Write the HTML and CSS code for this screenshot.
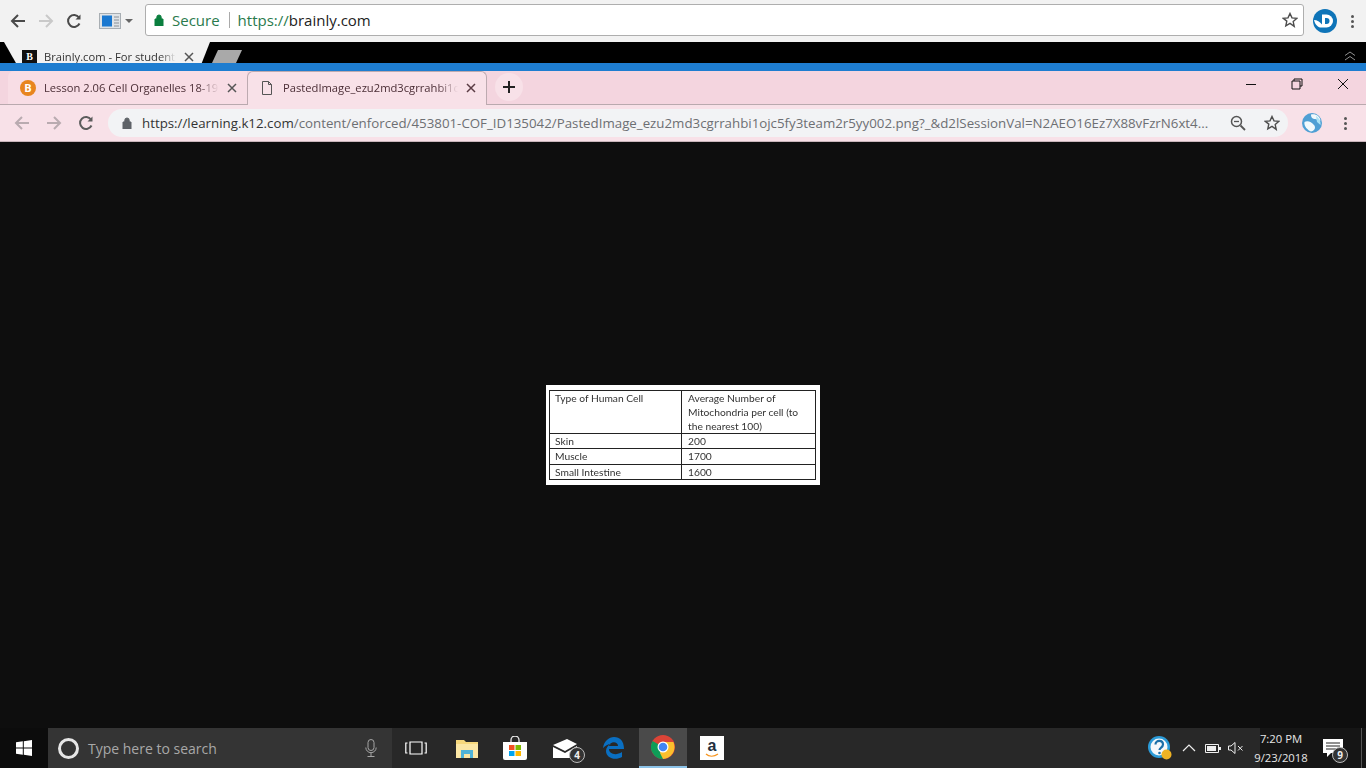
FILE: index.html
```html
<!DOCTYPE html>
<html lang="en">
<head>
<meta charset="utf-8">
<title>PastedImage</title>
<link rel="stylesheet" href="styles.css">
</head>
<body>
<div class="outer-toolbar">
  <svg class="nav-icon" viewBox="0 0 16 16"><path d="M15 8H2M8 2 2 8l6 6" class="st-dark"/></svg>
  <svg class="nav-icon" viewBox="0 0 16 16"><path d="M1 8h13M8 2l6 6-6 6" class="st-faint"/></svg>
  <svg class="nav-icon" viewBox="0 0 16 16"><path d="M13.500 10.500A6 6 0 1 1 13 4.500" class="st-dark"/><path d="M14.500 1.500v5h-5z" class="fill-dark"/></svg>
  <div class="ext-btn">
    <svg class="ext-icon" viewBox="0 0 22 16"><rect x=".5" y=".5" width="21" height="15" fill="#dfe3e6" stroke="#a8aeb3"/><rect x="3" y="2.500" width="10" height="11" fill="#1a78d0"/><path d="M15 4h5M15 7h5M15 10h5M15 13h5" stroke="#8a9097" fill="none"/></svg>
    <span class="caret"></span>
  </div>
  <div class="omnibox">
    <svg class="lock" viewBox="0 0 10 12"><path d="M1 5h8v7H1zM2.800 5V3.200a2.200 2.200 0 0 1 4.400 0V5" fill="#0b7f3f" stroke="#0b7f3f"/></svg>
    <span class="secure">Secure</span>
    <span class="divider"></span>
    <span class="url-green">https://</span><span class="url-dark">brainly.com</span>
    <svg class="star star-top" viewBox="0 0 16 16"><path d="m8 1.500 2 4.400 4.700.5-3.500 3.200 1 4.700L8 11.400 3.800 13.800l1-4.700L1.300 6.400 6 5.900z" class="st-star"/></svg>
  </div>
  <div class="profile-d">
    <svg viewBox="0 0 24 24" class="profile-svg"><circle cx="12" cy="12" r="12" fill="#0e74b8"/><path d="M9 5.500h4.500a6.500 6.500 0 0 1 0 13H9z" fill="#fff"/><path d="M12 9h1.500a3 3 0 0 1 0 6H12z" fill="#0e74b8"/><path d="M1 11c3 0 6 2 8 4.500v3c-4 .5-7-3-8-7.500z" fill="#fff"/></svg>
  </div>
  <div class="dots dots-top"><i></i><i></i><i></i></div>
</div>

<div class="black-strip">
  <div class="old-tab">
    <span class="b-fav">B</span>
    <span class="old-title">Brainly.com - For students</span>
    <svg class="x-icon x-old" viewBox="0 0 10 10"><path d="m1 1 8 8M9 1 1 9" class="st-x"/></svg>
  </div>
  <div class="old-new"></div>
  <svg class="chev" viewBox="0 0 12 10"><path d="m1 4.500 5-3.500 5 3.500M1 9l5-3.500L11 9" fill="none" stroke="#8f8f8f"/></svg>
</div>
<div class="blue-strip"></div>

<div class="tabstrip">
  <div class="tab tab-idle">
    <span class="o-fav">B</span>
    <span class="tab-title">Lesson 2.06 Cell Organelles 18-19</span>
    <svg class="x-icon" viewBox="0 0 10 10"><path d="m1 1 8 8M9 1 1 9" class="st-x"/></svg>
  </div>
  <div class="tab tab-active">
    <svg class="doc" viewBox="0 0 12 14"><path d="M1.500.5h6l3 3v10h-9zM7.500.5v3h3" fill="none" stroke="#555"/></svg>
    <span class="tab-title">PastedImage_ezu2md3cgrrahbi1ojc5fy3team2r5yy002.png</span>
    <svg class="x-icon" viewBox="0 0 10 10"><path d="m1 1 8 8M9 1 1 9" class="st-x2"/></svg>
  </div>
  <div class="newtab"><svg viewBox="0 0 12 12" class="plus"><path d="M6 0v12M0 6h12" stroke="#222" stroke-width="2"/></svg></div>
  <div class="win-controls">
    <svg class="win-ico" viewBox="0 0 12 12"><path d="M1 6.500h10" stroke="#111" fill="none"/></svg>
    <svg class="win-ico" viewBox="0 0 12 12"><path d="M3 3V1h8v7H9M1 3h8v8H1z" stroke="#111" fill="none"/></svg>
    <svg class="win-ico" viewBox="0 0 12 12"><path d="m1 1 10 10M11 1 1 11" stroke="#111" fill="none"/></svg>
  </div>
</div>

<div class="inner-toolbar">
  <svg class="nav-icon nav-a" viewBox="0 0 16 16"><path d="M15 8H2M8 2 2 8l6 6" class="st-faint2"/></svg>
  <svg class="nav-icon nav-b" viewBox="0 0 16 16"><path d="M1 8h13M8 2l6 6-6 6" class="st-faint2"/></svg>
  <svg class="nav-icon nav-c" viewBox="0 0 16 16"><path d="M13.500 10.500A6 6 0 1 1 13 4.500" class="st-mid"/><path d="M14.500 1.500v5h-5z" class="fill-mid"/></svg>
  <div class="inner-omni">
    <svg class="lock2" viewBox="0 0 10 12"><path d="M1 5h8v7H1zM2.800 5V3.200a2.200 2.200 0 0 1 4.400 0V5" fill="#5f6368" stroke="#5f6368"/></svg>
    <span class="inner-url"><span class="inner-host">https://learning.k12.com</span>/content/enforced/453801-COF_ID135042/PastedImage_ezu2md3cgrrahbi1ojc5fy3team2r5yy002.png?_&amp;d2lSessionVal=N2AEO16Ez7X88vFzrN6xt4...</span>
    <svg class="zoom-ico" viewBox="0 0 16 16"><circle cx="6.500" cy="6.500" r="5" fill="none" stroke="#555" stroke-width="1.500"/><path d="M4 6.500h5" stroke="#555" stroke-width="1.300"/><path d="m10.500 10.500 4.500 4.500" stroke="#555" stroke-width="1.800"/></svg>
    <svg class="star star-in" viewBox="0 0 16 16"><path d="m8 1.500 2 4.400 4.700.5-3.500 3.200 1 4.700L8 11.400 3.800 13.800l1-4.700L1.300 6.400 6 5.900z" class="st-star"/></svg>
  </div>
  <svg class="globe" viewBox="0 0 20 20"><circle cx="10" cy="10" r="10" fill="#4f9fd4"/><path d="M9 1.500c5-1 9 2 9.500 6-2 1-3.500-1.500-5.500-1.500S9 5 9 1.500zM2.500 9c3-2 7 0 9.500 3s0 6-3 6.500c-3-1-7.500-5.500-6.500-9.500z" fill="#f1f9fc"/><path d="M14 3c3 2 5 5 4.500 9L15 9z" fill="#a9e2f5"/></svg>
  <div class="dots dots-in"><i></i><i></i><i></i></div>
</div>

<main class="page">
  <div class="pasted">
    <table class="cells">
      <tr class="row-head"><td class="col-a">Type of Human Cell</td><td class="col-b">Average Number of Mitochondria per cell (to the nearest 100)</td></tr>
      <tr class="row-s"><td>Skin</td><td class="col-b">200</td></tr>
      <tr class="row-m"><td>Muscle</td><td class="col-b">1700</td></tr>
      <tr class="row-s"><td>Small Intestine</td><td class="col-b">1600</td></tr>
    </table>
  </div>
</main>

<footer class="taskbar">
  <div class="start"><svg class="win-logo" viewBox="0 0 16 16"><path d="M0 2.300 6.800 1.300v6.300H0zM7.800 1.200 16 0v7.600H7.800zM0 8.500h6.800v6.300L0 13.800zM7.800 8.500H16V16l-8.200-1.200z" fill="#fff"/></svg></div>
  <div class="search">
    <span class="cortana"></span>
    <span class="search-text">Type here to search</span>
    <svg class="mic" viewBox="0 0 12 18"><rect x="3" y=".5" width="6" height="11" rx="3" fill="none" stroke="#a5a5a5"/><path d="M.8 8.500a5.200 5.200 0 0 0 10.400 0M6 14v3.500M2.500 17.500h7" fill="none" stroke="#a5a5a5"/></svg>
  </div>
  <div class="tray-icons">
    <div class="tb-slot"><svg class="tv" viewBox="0 0 22 14"><path d="M5 1h12v12H5zM2.500 2H.8v10h1.700M19.500 2h1.700v10h-1.700" fill="none" stroke="#fff" stroke-width="1.200"/></svg></div>
    <div class="tb-slot"><svg class="folder" viewBox="0 0 22 19"><path d="M0 1h8l2 2h12v16H0z" fill="#f6d77c"/><path d="M0 5h22v14H0z" fill="#fbe6a5"/><path d="M5 11h12v8h-3v-4H8v4H5z" fill="#4fb3d8"/></svg></div>
    <div class="tb-slot"><svg class="store" viewBox="0 0 24 24"><path d="M8 6V4a4 4 0 0 1 8 0v2" fill="none" stroke="#e8e8e8" stroke-width="1.300"/><path d="M0 6h24v16a2 2 0 0 1-2 2H2a2 2 0 0 1-2-2z" fill="#fff"/><path d="M6 9h5.500v5H6z" fill="#f25022"/><path d="M12.500 9H18v5h-5.500z" fill="#7fba00"/><path d="M6 15h5.500v5H6z" fill="#00a4ef"/><path d="M12.500 15H18v5h-5.500z" fill="#ffb900"/></svg></div>
    <div class="tb-slot"><svg class="mail" viewBox="0 0 24 19"><path d="M0 6 14 0l10 5-12 7z" fill="#fff"/><path d="M0 8v11h24V7l-12 7z" fill="#fff"/></svg><span class="badge badge-mail">4</span></div>
    <div class="tb-slot"><svg class="edge" viewBox="0 0 22 22"><path d="M1 11C2 4 7 0 12 0c6 0 10 4 10 12H7c0 5 7 7 13 3v5c-7 4-16 1-16-6 0-3 2-6 5-7-3 0-6 2-8 4zM7 9h9c0-5-8-5-9 0z" fill="#0a6fc2"/></svg></div>
    <div class="tb-slot tb-chrome"><svg class="chrome" viewBox="0 0 24 24"><circle cx="12" cy="12" r="12" fill="#db4437"/><path d="M12 12 1.600 6A12 12 0 0 0 12 24l6-6z" fill="#0f9d58"/><path d="M12 7h10.400A12 12 0 0 1 12 24l-3-6z" fill="#fbc02d"/><circle cx="12" cy="12" r="5.500" fill="#fff"/><circle cx="12" cy="12" r="4.300" fill="#4285f4"/></svg></div>
    <div class="tb-slot"><div class="amazon"><span class="amazon-a">a</span><svg class="smile" viewBox="0 0 14 5"><path d="M1 1c3 3 8 3 12 0" fill="none" stroke="#f7941d" stroke-width="1.200"/></svg></div></div>
  </div>
  <div class="tray">
    <svg class="help" viewBox="0 0 24 24"><circle cx="11" cy="11" r="11" fill="#2b9bd8"/><circle cx="11" cy="11" r="8.500" fill="#f4f8fb"/><path d="M7.500 8.500c0-5 7.500-4.500 7.500 0 0 3-3.500 3-3.500 5.500" fill="none" stroke="#1b6fa8" stroke-width="2.200"/><circle cx="11.500" cy="17" r="1.300" fill="#1b6fa8"/><circle cx="18.500" cy="18.500" r="5" fill="#f0b323"/></svg>
    <svg class="up" viewBox="0 0 14 8"><path d="m1 7 6-6 6 6" fill="none" stroke="#eee" stroke-width="1.200"/></svg>
    <svg class="batt" viewBox="0 0 16 9"><path d="M.5.500h13v8H.5z" fill="none" stroke="#eee"/><path d="M2 2h9v5H2z" fill="#eee"/><path d="M14 3h2v3h-2z" fill="#eee"/></svg>
    <svg class="vol" viewBox="0 0 16 12"><path d="M.5 4h2.500l4-3.500v11l-4-3.500H.500z" fill="none" stroke="#eee"/><path d="m10 4 4.500 4.500M14.500 4 10 8.500" stroke="#eee" fill="none"/></svg>
  </div>
  <div class="clock"><span class="clock-time">7:20 PM</span><span class="clock-date">9/23/2018</span></div>
  <div class="notify"><svg class="note" viewBox="0 0 20 18"><path d="M0 0h20v14H8l-4 4v-4H0z" fill="#fff"/><path d="M3 4h14M3 7h14M3 10h10" stroke="#222"/></svg><span class="badge badge-note">9</span></div>
</footer>
</body>
</html>
```
FILE: styles.css
```css
* { box-sizing: border-box; }
html, body { margin: 0; padding: 0; }
body {
  width: 1366px; height: 768px; overflow: hidden;
  display: flex; flex-direction: column;
  font-family: "Open Sans", "Noto Sans", sans-serif;
  background: #0e0e0e;
}
svg { display: block; flex: none; }
.st-dark { fill: none; stroke: #4a4a4a; stroke-width: 2; }
.st-faint { fill: none; stroke: #c9c9c9; stroke-width: 2; }
.st-faint2 { fill: none; stroke: #b9abb0; stroke-width: 2; }
.st-mid { fill: none; stroke: #5c5c5c; stroke-width: 2; }
.fill-dark { fill: #4a4a4a; }
.fill-mid { fill: #5c5c5c; }
.st-star { fill: none; stroke: #4d4d4d; stroke-width: 1.400; }
.st-x { fill: none; stroke: #555; stroke-width: 1.500; }
.st-x2 { fill: none; stroke: #5a3b44; stroke-width: 1.500; }

.outer-toolbar {
  height: 42px; flex: none; background: #f2f2f2;
  display: flex; align-items: center; padding-left: 10px;
}
.nav-icon { width: 16px; height: 16px; margin-right: 12px; }
.ext-btn { display: flex; align-items: center; margin-left: 5px; }
.ext-icon { width: 22px; height: 16px; }
.caret { width: 0; height: 0; border: 4px solid transparent; border-top-color: #666; border-bottom: 0; margin-left: 4px; }
.omnibox {
  width: 1159px; height: 32px; margin: -2px 0 0 12px;
  background: #fff; border: 1px solid #aeaeae; border-radius: 3px;
  display: flex; align-items: center; padding-left: 8px;
  font-size: 15px; white-space: nowrap;
}
.lock { width: 10px; height: 12px; margin-right: 8px; }
.secure { color: #2a7a4d; }
.divider { width: 1px; height: 16px; background: #aaa; margin: 0 8px 0 9px; }
.url-green { color: #2a7a4d; }
.url-dark { color: #222; }
.star { width: 16px; height: 16px; }
.star-top { margin-left: auto; margin-right: 5px; }
.profile-d { margin-left: 9px; }
.profile-svg { width: 24px; height: 24px; }
.dots { display: flex; flex-direction: column; gap: 2px; }
.dots i { display: block; width: 3px; height: 3px; border-radius: 50%; background: #555; }
.dots-top { margin-left: 14px; }

.black-strip {
  height: 21px; flex: none; background: #000;
  display: flex; align-items: flex-end; padding-left: 4px;
}
.old-tab {
  width: 206px; height: 21px; background: #f2f2f2;
  clip-path: polygon(0 0, 100% 0, 96% 100%, 5.800% 100%);
  display: flex; align-items: flex-end; padding-left: 18px;
  color: #333; font-size: 11.200px; white-space: nowrap;
}
.b-fav {
  width: 15px; height: 13px; background: #111; color: #fff;
  font: bold 10px/13px "Liberation Serif", serif; text-align: center; margin-right: 7px; flex: none;
}
.old-title {
  width: 132px; height: 13px; line-height: 14px; overflow: hidden;
  -webkit-mask-image: linear-gradient(to right, #000 88%, transparent);
  mask-image: linear-gradient(to right, #000 88%, transparent);
}
.x-icon { width: 10px; height: 10px; margin-left: 8px; }
.x-old { margin-bottom: 1px; }
.old-new {
  width: 30px; height: 13px; margin-left: 2px; background: #a9a9a9;
  clip-path: polygon(20% 0, 100% 0, 80% 100%, 0 100%);
}
.chev { width: 12px; height: 10px; margin-left: auto; margin-right: 10px; margin-bottom: 2px; }
.blue-strip { height: 8px; flex: none; background: #1e7dd0; }

.tabstrip {
  height: 34px; flex: none; background: #f4d5df;
  display: flex; align-items: flex-end; padding-left: 8px;
  border-bottom: 1px solid #b9a9ae;
}
.tab { width: 239px; height: 33px; display: flex; align-items: center; font-size: 11.200px; color: #4a2d35; white-space: nowrap; }
.tab-idle { background: #f8dde5; padding-left: 12px; border-radius: 6px 0 0 0; }
.tab-active {
  width: 240px; height: 34px; margin-bottom: -1px; background: #f8e1e8;
  padding: 0 0 2px 13px; border: 1px solid #bdaab0; border-bottom: 0; border-radius: 6px 6px 0 0;
}
.o-fav {
  width: 16px; height: 16px; border-radius: 50%; background: #e8851f; color: #fff; flex: none;
  font: bold 11px/16px "Open Sans", sans-serif; text-align: center; margin-right: 8px;
}
.doc { width: 12px; height: 14px; margin-right: 10px; }
.tab-title {
  width: 175px; overflow: hidden;
  -webkit-mask-image: linear-gradient(to right, #000 88%, transparent);
  mask-image: linear-gradient(to right, #000 88%, transparent);
}
.tab .x-icon { margin-left: 8px; }
.newtab {
  width: 28px; height: 28px; border-radius: 50%; background: #f8e1e8;
  display: flex; align-items: center; justify-content: center;
  margin: 0 0 3px 8px;
}
.plus { width: 12px; height: 12px; }
.win-controls { margin-left: auto; display: flex; align-self: flex-start; padding-top: 7px; }
.win-ico { width: 12px; height: 12px; margin-right: 34px; }
.win-controls .win-ico:last-child { margin-right: 17px; }

.inner-toolbar {
  height: 37px; flex: none; background: #f8e1e8;
  display: flex; align-items: center; padding-left: 14px;
  border-bottom: 1px solid #c9b5bb;
}
.nav-a { margin-right: 16px; }
.nav-b { margin-right: 16px; }
.nav-c { margin-right: 14px; }
.inner-omni {
  width: 1180px; height: 28px; border-radius: 14px; background: #f2f3f5;
  display: flex; align-items: center; padding-left: 14px;
  font-size: 13.300px; white-space: nowrap;
}
.lock2 { width: 10px; height: 12px; margin-right: 10px; }
.inner-url { color: #6d6f73; width: 1068px; overflow: hidden; }
.inner-host { color: #333; }
.zoom-ico { width: 16px; height: 16px; margin-left: 20px; }
.star-in { margin-left: 18px; }
.globe { width: 20px; height: 20px; margin-left: 14px; }
.dots-in { margin-left: 22px; }

.page { flex: 1; background: #0e0e0e; display: flex; align-items: center; justify-content: center; }
.pasted { width: 274px; height: 100px; background: #fff; padding: 5px 0 0 3px; }
.cells {
  width: 267px; border-collapse: collapse; table-layout: fixed;
  font: 10.250px/14px Lato, "Open Sans", sans-serif; color: #333;
  filter: blur(.3px);
}
.cells td { border: 1px solid #222; padding: 0 5px; vertical-align: middle; }
.cells .col-b { padding-left: 6px; }
.row-head td { vertical-align: top; height: 43px; }
.row-s td { height: 15px; line-height: 13px; }
.row-m td { height: 16px; line-height: 13px; padding-bottom: 1px; }
.col-a { width: 132px; }

.taskbar { height: 40px; flex: none; background: #282828; display: flex; align-items: stretch; position: relative; }
.start { width: 48px; background: #0c0c0c; display: flex; align-items: center; justify-content: center; }
.win-logo { width: 16px; height: 16px; }
.search { width: 344px; background: #343434; display: flex; align-items: center; padding-left: 10px; }
.cortana { width: 21px; height: 21px; border-radius: 50%; border: 3px solid #e6e6e6; flex: none; }
.search-text { color: #a8a8a8; font-size: 14px; margin-left: 9px; white-space: nowrap; width: 277px; }
.mic { width: 12px; height: 18px; }
.tray-icons { display: flex; width: 345px; }
.tb-slot { width: 49px; position: relative; display: flex; align-items: center; justify-content: center; }
.tb-slot:nth-child(1) { width: 51px; padding-right: 3px; }
.tb-slot:nth-child(2) { width: 48px; }
.tb-slot:nth-child(3) { padding-right: 1px; }
.tb-slot:nth-child(4) { width: 50px; }
.tb-slot:nth-child(5) { padding-right: 3px; }
.tb-slot:nth-child(6) { width: 48px; }
.tb-slot:nth-child(7) { width: 50px; }
.tv { width: 22px; height: 14px; }
.folder { width: 22px; height: 19px; }
.store { width: 24px; height: 24px; }
.mail { width: 24px; height: 19px; }
.edge { width: 22px; height: 22px; }
.tb-chrome { background: #4a4a4a; border-bottom: 2px solid #8cc3e8; }
.chrome { width: 24px; height: 24px; }
.amazon {
  width: 24px; height: 24px; background: #fff; padding-top: 2px;
  display: flex; flex-direction: column; align-items: center;
}
.amazon-a { font: bold 16px/15px "Liberation Sans", sans-serif; color: #232f3e; }
.smile { width: 14px; height: 5px; }
.badge {
  position: absolute; width: 16px; height: 16px; border-radius: 50%;
  background: #333; border: 1px solid #bbb; color: #eee;
  font: bold 10px/14px "Open Sans", sans-serif; text-align: center;
}
.badge-mail { right: 5px; bottom: 5px; }
.tray { flex: 1; display: flex; align-items: center; }
.help { width: 24px; height: 24px; margin-left: 411px; }
.up { width: 14px; height: 8px; margin-left: 10px; }
.batt { width: 16px; height: 9px; margin-left: 9px; }
.vol { width: 16px; height: 12px; margin-left: 7px; }
.clock {
  width: 64px; background: linear-gradient(to right, transparent 11px, #151515 11px);
  display: flex; flex-direction: column; align-items: center;
  justify-content: center; color: #e6e6e6; font-size: 11.300px; line-height: 19px;
}
.notify { width: 53px; position: relative; background: #151515; display: flex; align-items: center; justify-content: center; padding-right: 13px; }
.notify::after { content: ""; position: absolute; left: 48px; top: 0; bottom: 0; width: 1px; background: #555; }
.note { width: 20px; height: 18px; }
.badge-note { right: 18px; bottom: 5px; }
```
